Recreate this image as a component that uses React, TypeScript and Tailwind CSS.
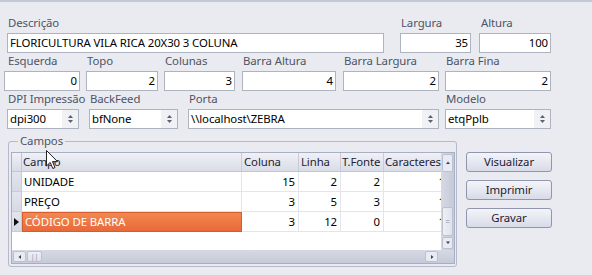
import React from 'react'

type Row = { campo: string; coluna: number; linha: number; fonte: number; chars: number; current?: boolean }

const rows: Row[] = [
  { campo: 'UNIDADE', coluna: 15, linha: 2, fonte: 2, chars: 1 },
  { campo: 'PREÇO', coluna: 3, linha: 5, fonte: 3, chars: 1 },
  { campo: 'CÓDIGO DE BARRA', coluna: 3, linha: 12, fonte: 0, chars: 1, current: true },
]

function SpinArrows() {
  return (
    <svg width="7" height="10" viewBox="0 0 7 10" fill="#5b6072">
      <path d="M3.5 1 L6 4 L1 4 Z" />
      <path d="M3.5 9 L6 6 L1 6 Z" />
    </svg>
  )
}

function Label({ children, className = '' }: { children: React.ReactNode; className?: string }) {
  return <div className={`h-4 leading-4 pl-[1px] text-[#4e5466] whitespace-nowrap ${className}`}>{children}</div>
}

function NumBox({ value }: { value: string }) {
  return (
    <div className="mt-[2px] h-5 border border-[#aeb3c2] bg-white flex items-center justify-end pr-[2px] text-black">
      {value}
    </div>
  )
}

function Combo({ value }: { value: string }) {
  return (
    <div className="mt-[2px] h-5 border border-[#aeb3c2] bg-white flex items-stretch text-black">
      <span className="flex-1 flex items-center pl-[2px] whitespace-nowrap overflow-hidden">{value}</span>
      <span className="w-[16px] flex items-center justify-center bg-[#f0f1f5]">
        <SpinArrows />
      </span>
    </div>
  )
}

function ScrollBtn({ dir }: { dir: 'up' | 'down' | 'left' | 'right' }) {
  const d = {
    up: 'M1 4 L3 1.5 L5 4 Z',
    down: 'M1 1.5 L3 4 L5 1.5 Z',
    left: 'M4 1 L1.5 3 L4 5 Z',
    right: 'M2 1 L4.5 3 L2 5 Z',
  }[dir]
  return (
    <svg width="6" height="6" viewBox="0 0 6 6" fill="#3c4258">
      <path d={d} />
    </svg>
  )
}

export default function App() {
  return (
    <div className="relative w-[592px] h-[275px] overflow-hidden bg-[#e9ebf0] border-t-2 border-[#c2c8d6] pt-[13px] font-['Noto_Sans',sans-serif] text-[11.4px] tracking-[-0.1px]">
      {/* linha 1 */}
      <div className="flex">
        <div className="ml-[7px] w-[377px]">
          <Label>Descrição</Label>
          <div className="mt-[2px] h-5 border border-[#aeb3c2] bg-white flex items-center pl-[2px] text-black whitespace-nowrap">
            FLORICULTURA VILA RICA 20X30 3 COLUNA
          </div>
        </div>
        <div className="ml-[16px] w-[71px]">
          <Label>Largura</Label>
          <NumBox value="35" />
        </div>
        <div className="ml-[8px] w-[72px]">
          <Label className="pl-[2px]">Altura</Label>
          <NumBox value="100" />
        </div>
      </div>

      {/* linha 2 */}
      <div className="flex">
        <div className="ml-[4px] w-[76px]">
          <Label className="pl-[4px]">Esquerda</Label>
          <NumBox value="0" />
        </div>
        <div className="ml-[6px] w-[72px]">
          <Label>Topo</Label>
          <NumBox value="2" />
        </div>
        <div className="ml-[6px] w-[71px]">
          <Label>Colunas</Label>
          <NumBox value="3" />
        </div>
        <div className="ml-[7px] w-[94px]">
          <Label>Barra Altura</Label>
          <NumBox value="4" />
        </div>
        <div className="ml-[7px] w-[96px]">
          <Label>Barra Largura</Label>
          <NumBox value="2" />
        </div>
        <div className="ml-[6px] w-[106px]">
          <Label>Barra Fina</Label>
          <NumBox value="2" />
        </div>
      </div>

      {/* linha 3 */}
      <div className="flex">
        <div className="ml-[7px] w-[72px]">
          <Label>DPI Impressão</Label>
          <Combo value="dpi300" />
        </div>
        <div className="ml-[10px] w-[89px]">
          <Label>BackFeed</Label>
          <Combo value="bfNone" />
        </div>
        <div className="ml-[10px] w-[251px]">
          <Label>Porta</Label>
          <Combo value="\\localhost\ZEBRA" />
        </div>
        <div className="ml-[6px] w-[106px]">
          <Label>Modelo</Label>
          <Combo value="etqPplb" />
        </div>
      </div>

      {/* campos + botoes */}
      <div className="flex items-start mt-[4px]">
        <fieldset className="ml-[8px] w-[449px] h-[134px] border border-[#b4b9cb] rounded-[3px] pl-[2px]">
          <legend className="ml-[7px] px-[2px] h-4 leading-4 text-[#4e5466]">Campos</legend>
          <div className="mt-[3px] w-[444px] h-[112px] border border-[#a9afc3] bg-white flex flex-col">
            <div className="flex h-[97px]">
              <div className="w-[429px] overflow-hidden">
                {/* cabecalho */}
                <div className="flex h-[19px] w-max bg-gradient-to-b from-[#f0f1f6] to-[#d9dce7] text-[#1f2233] border-b border-[#c3c7d5]">
                  <div className="w-[10px] border-r border-[#c3c7d5]" />
                  <div className="w-[220px] pl-[1px] leading-[18px] border-r border-[#c9ccd8]">Campo</div>
                  <div className="w-[57px] pl-[2px] leading-[18px] border-r border-[#c9ccd8]">Coluna</div>
                  <div className="w-[42px] pl-[2px] leading-[18px] border-r border-[#c9ccd8]">Linha</div>
                  <div className="w-[43px] pl-[1px] leading-[18px] border-r border-[#c9ccd8] whitespace-nowrap">T.Fonte</div>
                  <div className="w-[63px] pl-[1px] leading-[18px] whitespace-nowrap overflow-hidden">Caracteres</div>
                </div>
                {rows.map((r) => (
                  <div key={r.campo} className="flex h-5 w-max text-black">
                    <div className="w-[10px] flex items-center justify-center bg-gradient-to-b from-[#e3e5ee] to-[#d6d9e5] border-r border-b border-[#c8ccd8]">
                      {r.current && (
                        <svg width="5" height="8" viewBox="0 0 5 8" fill="#111">
                          <path d="M0 0 L5 4 L0 8 Z" />
                        </svg>
                      )}
                    </div>
                    <div
                      className={
                        r.current
                          ? 'w-[220px] pl-[2px] leading-[18px] text-white bg-gradient-to-b from-[#f3874f] to-[#e8693a] border border-[#d35d2c]'
                          : 'w-[220px] pl-[2px] leading-[19px] border-r border-b border-[#e3e5eb]'
                      }
                    >
                      {r.campo}
                    </div>
                    <div className="w-[57px] pr-[3px] text-right leading-[19px] border-r border-b border-[#e3e5eb]">{r.coluna}</div>
                    <div className="w-[42px] pr-[3px] text-right leading-[19px] border-r border-b border-[#e3e5eb]">{r.linha}</div>
                    <div className="w-[43px] pr-[3px] text-right leading-[19px] border-r border-b border-[#e3e5eb]">{r.fonte}</div>
                    <div className="w-[63px] pr-[2px] text-right leading-[19px] border-b border-[#e3e5eb]">{r.chars}</div>
                  </div>
                ))}
              </div>
              {/* barra vertical */}
              <div className="w-[13px] flex flex-col bg-gradient-to-r from-[#d6d9e4] to-[#c6cad9]">
                <div className="h-[18px] m-[1px] rounded-[2px] border border-[#bcc1d1] bg-[#e9ebf2] flex items-center justify-center">
                  <ScrollBtn dir="up" />
                </div>
                <div className="flex-1" />
                <div className="h-[29px] mx-[1px] rounded-[2px] border border-[#bcc1d1] bg-gradient-to-r from-[#eef0f5] to-[#dfe2eb] flex items-center justify-center text-[8px] leading-none text-[#8a90a6]">
                  =
                </div>
                <div className="h-[12px] m-[1px] rounded-[2px] border border-[#bcc1d1] bg-[#e9ebf2] flex items-center justify-center">
                  <ScrollBtn dir="down" />
                </div>
              </div>
            </div>
            {/* barra horizontal */}
            <div className="flex h-[13px] bg-gradient-to-b from-[#d6d9e4] to-[#c6cad9]">
              <div className="w-[13px] my-[1px] ml-[1px] rounded-[2px] border border-[#bcc1d1] bg-[#e9ebf2] flex items-center justify-center">
                <ScrollBtn dir="left" />
              </div>
              <div className="w-[15px] my-[1px] ml-[1px] rounded-[2px] border border-[#bcc1d1] bg-gradient-to-b from-[#eef0f5] to-[#dfe2eb] flex items-center justify-center text-[7px] leading-none text-[#8a90a6]">
                ||
              </div>
              <div className="flex-1" />
              <div className="w-[13px] my-[1px] mr-[3px] rounded-[2px] border border-[#bcc1d1] bg-[#e9ebf2] flex items-center justify-center">
                <ScrollBtn dir="right" />
              </div>
              <div className="w-[13px]" />
            </div>
          </div>
        </fieldset>

        <div className="ml-[9px] mt-[19px] flex flex-col gap-2 w-[86px]">
          {['Visualizar', 'Imprimir', 'Gravar'].map((b) => (
            <button
              key={b}
              className="h-5 rounded-[3px] border border-[#8f96ad] bg-gradient-to-b from-[#f4f5fa] to-[#d8dbe8] text-[#1d2030] leading-[18px]"
            >
              {b}
            </button>
          ))}
        </div>
      </div>

      {/* ponteiro do mouse */}
      <svg className="absolute left-[46px] top-[148px]" width="13" height="20" viewBox="0 0 13 20">
        <path d="M0.5 0.5 L0.5 16 L4.2 12.4 L6.8 18.5 L9 17.6 L6.5 11.6 L11.5 11.6 Z" fill="#fff" stroke="#222" strokeWidth="1" strokeLinejoin="round" />
      </svg>
    </div>
  )
}
